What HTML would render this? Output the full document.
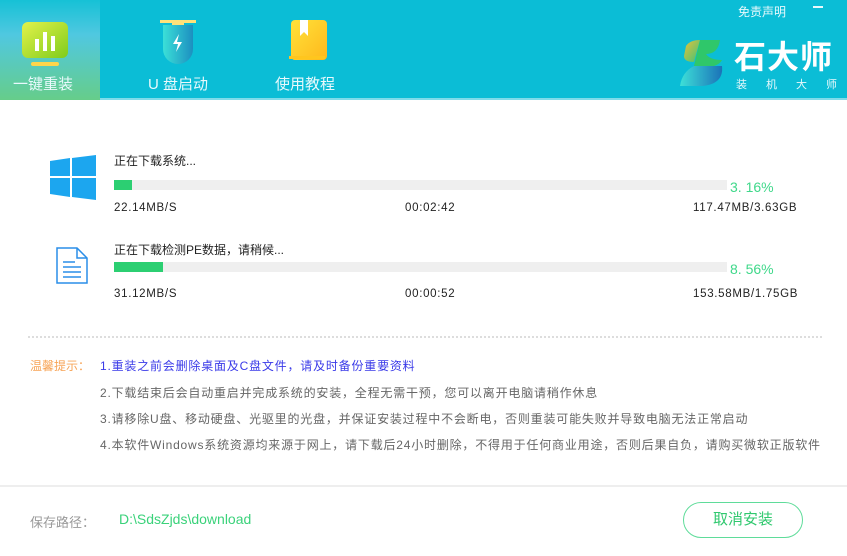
<!DOCTYPE html>
<html><head><meta charset="utf-8"><style>
*{margin:0;padding:0;box-sizing:border-box}
body{width:847px;height:556px;overflow:hidden;background:#fff;font-family:"Liberation Sans","Noto Sans CJK SC",sans-serif;position:relative}
.a{position:absolute;white-space:nowrap}
.hd{position:absolute;left:0;top:0;width:847px;height:100px;background:#0bbdd6;border-bottom:2px solid #7fdcea}
.tab{position:absolute;top:0;width:100px;height:100px;color:#e8f9fc;font-size:15px;text-align:center}
.t{font-size:12px;color:#222}
.s{font-size:11.5px;color:#222;letter-spacing:0.7px}
.bar{position:absolute;left:114px;width:613px;height:10px;background:#efefef}
.bar i{position:absolute;left:0;top:0;height:10px;background:#2ccf72}
.pc{font-size:14px;color:#3fd88a}
.tip{font-size:12px;color:#666;letter-spacing:0.8px}
</style></head><body>
<div class="hd"></div>
<div class="tab" style="left:0;width:100px;background:linear-gradient(#16c1d6 0%,#50c8e0 35%,#66cd8a 100%)">
<svg class="a" style="left:22px;top:22px" width="46" height="44" viewBox="0 0 46 44"><defs><linearGradient id="g1" x1="0" y1="0" x2="1" y2="1"><stop offset="0" stop-color="#e3f24a"/><stop offset="1" stop-color="#7fcc1c"/></linearGradient></defs><rect x="0" y="0" width="46" height="36" rx="6" fill="url(#g1)"/><rect x="13" y="17" width="4" height="12" fill="#fff"/><rect x="21" y="10" width="4" height="19" fill="#fff"/><rect x="29" y="14" width="4" height="15" fill="#fff"/><rect x="9" y="40" width="28" height="4" rx="2" fill="#ffd54a"/></svg>
<div class="a" style="left:13px;top:73px">一键重装</div></div>
<div class="tab" style="left:130px;width:100px">
<svg class="a" style="left:30px;top:20px" width="36" height="44" viewBox="0 0 36 44"><defs><linearGradient id="g2" x1="0" y1="0" x2="1" y2="0"><stop offset="0" stop-color="#3be0d8"/><stop offset="1" stop-color="#1c8fc0"/></linearGradient></defs><rect x="0" y="0" width="36" height="3" fill="#ffe27a"/><rect x="12" y="2" width="12" height="4" fill="#ffe27a"/><path d="M3 5h30v24a15 15 0 0 1-30 0z" fill="url(#g2)"/><path d="M19 14l-6 10h5l-2 8 6-10h-5z" fill="#fff"/></svg>
<div class="a" style="left:18px;top:73px">U 盘启动</div></div>
<div class="tab" style="left:262px;width:100px">
<svg class="a" style="left:27px;top:20px" width="38" height="44" viewBox="0 0 38 44"><defs><linearGradient id="g3" x1="0" y1="0" x2="1" y2="1"><stop offset="0" stop-color="#ffe23a"/><stop offset="1" stop-color="#ffb81c"/></linearGradient></defs><rect x="2" y="0" width="36" height="40" rx="4" fill="url(#g3)"/><rect x="0" y="36" width="36" height="3" fill="#ffc61e"/><path d="M11 0h8v16l-4-4-4 4z" fill="#fff"/></svg>
<div class="a" style="left:13px;top:73px">使用教程</div></div>
<div class="a" style="left:738px;top:3px;font-size:12px;color:#e8f9fc">免责声明</div>
<div class="a" style="left:813px;top:6px;width:10px;height:2px;background:#e8f9fc"></div>
<svg class="a" style="left:680px;top:40px" width="48" height="46" viewBox="0 0 48 46"><defs><linearGradient id="g4" x1="0" y1="0" x2="1" y2="1"><stop offset="0" stop-color="#e8c13a"/><stop offset="1" stop-color="#3ac47a"/></linearGradient><linearGradient id="g5" x1="0" y1="0" x2="1" y2="0"><stop offset="0" stop-color="#3de0d8"/><stop offset="1" stop-color="#1b72b8"/></linearGradient></defs><path d="M6 6q4-6 14-6l-6 22q-10 0-10-6z" fill="url(#g4)"/><path d="M20 0h20q-2 14-14 14 4 6 16 6-2 4-8 6H14z" fill="#2fc76a"/><path d="M14 26h28q2 18-20 20H0q2-14 14-20z" fill="url(#g5)"/></svg>
<div class="a" style="left:734px;top:32px;font-size:32px;font-weight:bold;color:#fff;letter-spacing:1px">石大师</div>
<div class="a" style="left:736px;top:76px;font-size:11px;color:#e8f9fc;letter-spacing:19px">装机大师</div>

<svg class="a" style="left:50px;top:155px" width="46" height="45" viewBox="0 0 46 45"><path d="M0 6l20-3v18H0zM22 3L46 0v21H22zM0 23h20v19L0 39zM22 23h24v22l-24-3z" fill="#1ca6ef"/></svg>
<svg class="a" style="left:56px;top:247px" width="32" height="37" viewBox="0 0 32 37"><path d="M1 1h20l10 10v25H1z" fill="#fff" stroke="#2a8ee8" stroke-width="1.5"/><path d="M21 1v10h10" fill="none" stroke="#2a8ee8" stroke-width="1.5"/><path d="M7 15h12M7 20h18M7 25h18M7 30h18" stroke="#2a8ee8" stroke-width="1.5"/></svg>

<div class="a t" style="left:114px;top:152px">正在下载系统...</div>
<div class="bar" style="top:180px"><i style="width:18px"></i></div>
<div class="a pc" style="left:730px;top:179px">3. 16%</div>
<div class="a s" style="left:114px;top:202px">22.14MB/S</div>
<div class="a s" style="left:405px;top:202px">00:02:42</div>
<div class="a s" style="left:693px;top:202px">117.47MB/3.63GB</div>

<div class="a t" style="left:114px;top:241px">正在下载检测PE数据，请稍候...</div>
<div class="bar" style="top:262px"><i style="width:49px"></i></div>
<div class="a pc" style="left:730px;top:261px">8. 56%</div>
<div class="a s" style="left:114px;top:288px">31.12MB/S</div>
<div class="a s" style="left:405px;top:288px">00:00:52</div>
<div class="a s" style="left:693px;top:288px">153.58MB/1.75GB</div>

<div class="a" style="left:28px;top:336px;width:794px;border-top:2px dotted #ddd"></div>
<div class="a tip" style="left:30px;top:357px;color:#f7a457;letter-spacing:0">温馨提示：</div>
<div class="a tip" style="left:100px;top:357px;color:#3a3ae8">1.重装之前会删除桌面及C盘文件，请及时备份重要资料</div>
<div class="a tip" style="left:100px;top:384px">2.下载结束后会自动重启并完成系统的安装，全程无需干预，您可以离开电脑请稍作休息</div>
<div class="a tip" style="left:100px;top:410px">3.请移除U盘、移动硬盘、光驱里的光盘，并保证安装过程中不会断电，否则重装可能失败并导致电脑无法正常启动</div>
<div class="a tip" style="left:100px;top:436px">4.本软件Windows系统资源均来源于网上，请下载后24小时删除，不得用于任何商业用途，否则后果自负，请购买微软正版软件</div>
<div class="a" style="left:0;top:485px;width:847px;height:2px;background:#eee"></div>
<div class="a" style="left:30px;top:512px;font-size:13px;color:#999">保存路径：</div>
<div class="a" style="left:119px;top:511px;font-size:14px;color:#3ad27a">D:\SdsZjds\download</div>
<div class="a" style="left:683px;top:502px;width:120px;height:36px;border:1.5px solid #5fdc9a;border-radius:18px;color:#2fc86e;font-size:15px;text-align:center;line-height:33px">取消安装</div>
</body></html>
